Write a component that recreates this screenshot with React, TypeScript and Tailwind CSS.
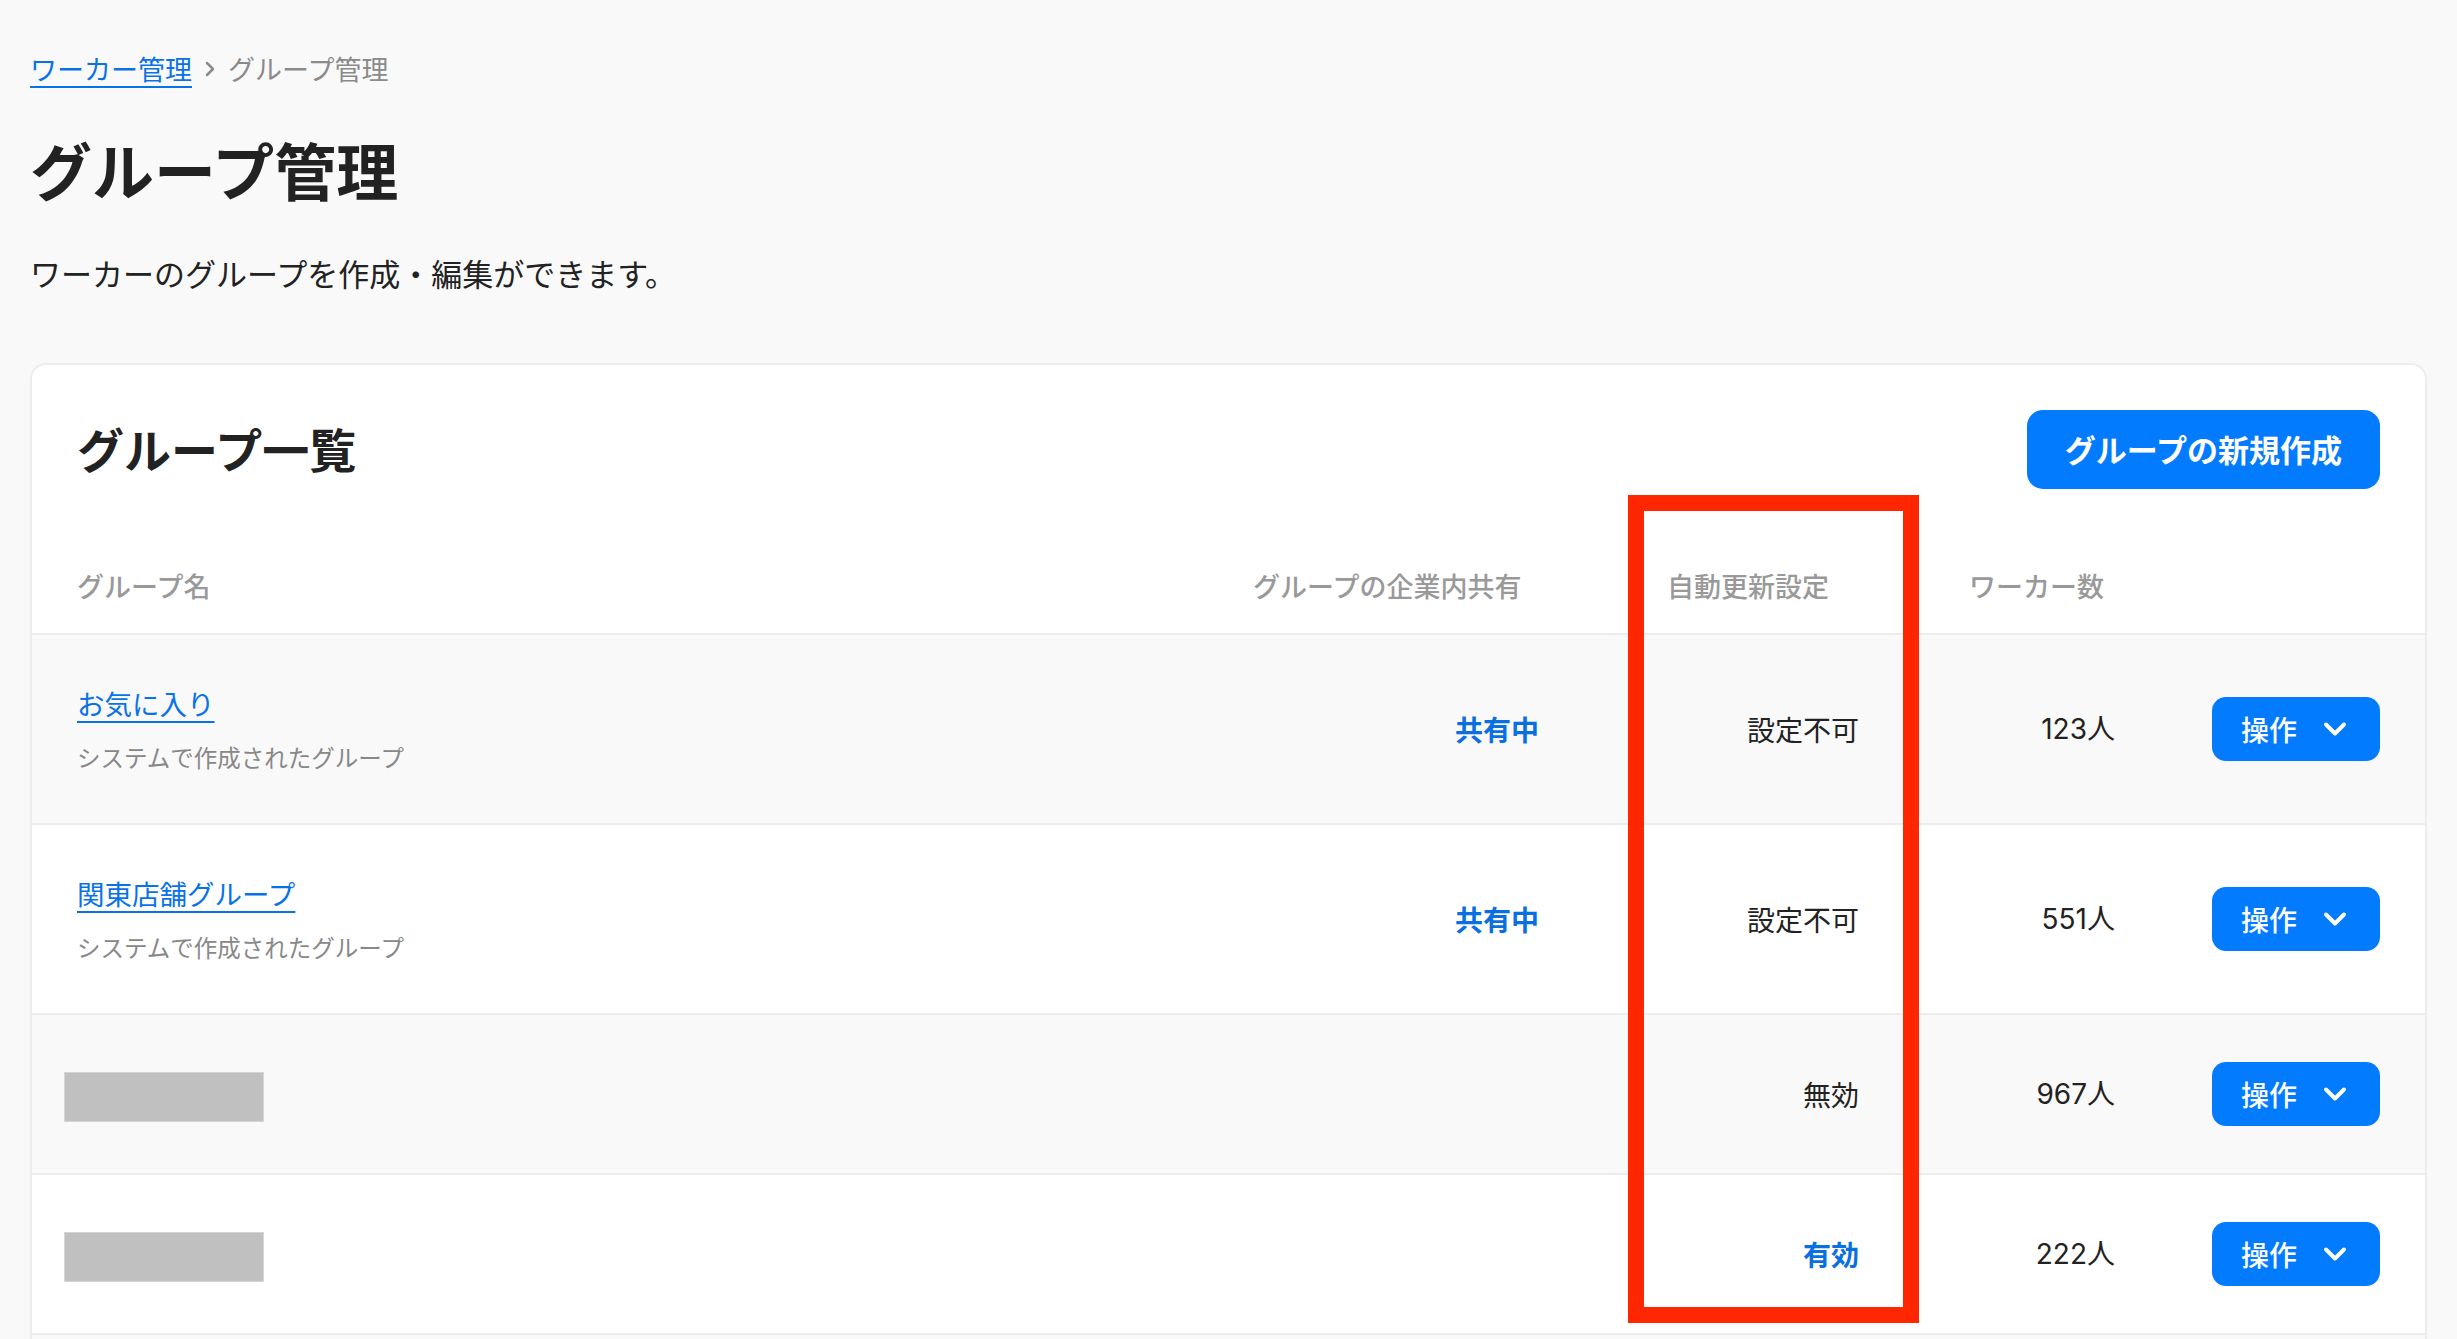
import { ChevronDown } from "lucide-react";

type Group = {
  name?: string;
  note?: string;
  shared?: boolean;
  auto: string;
  count: number;
};

const GROUPS: Group[] = [
  { name: "お気に入り", note: "システムで作成されたグループ", shared: true, auto: "設定不可", count: 123 },
  { name: "関東店舗グループ", note: "システムで作成されたグループ", shared: true, auto: "設定不可", count: 551 },
  { auto: "無効", count: 967 },
  { auto: "有効", count: 222 },
];

const COLS = "grid grid-cols-[1fr_416px_258px_247px_275px]";

function ActionButton() {
  return (
    <button className="flex h-[64px] w-[168px] items-center gap-[20px] rounded-[14px] bg-[#037bff] pl-[29px] text-[28px] font-medium text-white">
      <span className="leading-none">操作</span>
      <ChevronDown size={36} strokeWidth={2.6} />
    </button>
  );
}

export default function App() {
  return (
    <div
      className="relative min-h-screen bg-[#f9f9f9] px-[30px] pb-[60px] text-[#1f1f1f]"
      style={{ fontFamily: '"Noto Sans CJK JP", "Noto Sans", sans-serif' }}
    >
      {/* breadcrumb */}
      <nav className="flex items-center gap-[12px] pt-[49px] text-[27px] leading-[40px]">
        <a className="text-[#0a72e8] underline decoration-[2px] underline-offset-[6px]">ワーカー管理</a>
        <svg width="12" height="18" viewBox="0 0 12 18" className="text-[#8a8a8a]">
          <path d="M3 3l6 6-6 6" fill="none" stroke="currentColor" strokeWidth="2.5" strokeLinecap="round" strokeLinejoin="round" />
        </svg>
        <span className="text-[#8a8a8a]">グループ管理</span>
      </nav>

      <h1 className="mt-[34px] text-[62px] font-bold leading-[92px] text-[#222]">グループ管理</h1>
      <p className="mt-[36px] text-[31px] leading-[44px] text-[#222]">ワーカーのグループを作成・編集ができます。</p>

      <section className="mt-[68px] overflow-hidden rounded-[16px] border-2 border-[#ededed] bg-white">
        <div className="flex items-center justify-between px-[45px] pt-[45px]">
          <h2 className="-mt-[4px] text-[47px] font-bold leading-[60px] text-[#222]">グループ一覧</h2>
          <button className="h-[79px] rounded-[16px] bg-[#037bff] px-[38px] text-[31px] font-bold text-white">
            グループの新規作成
          </button>
        </div>

        {/* header */}
        <div className={`${COLS} pb-[27px] pt-[77px] text-[27px] font-medium leading-[40px] text-[#999]`}>
          <div className="pl-[45px]">グループ名</div>
          <div className="pl-[24px]">グループの企業内共有</div>
          <div className="pl-[22px]">自動更新設定</div>
          <div className="pl-[66px]">ワーカー数</div>
          <div />
        </div>

        {GROUPS.map((g, i) => (
          <div
            key={i}
            className={`${COLS} items-center border-t-2 border-[#ededed] ${g.name ? "h-[190px]" : "h-[160px]"} ${
              i % 2 === 0 ? "bg-[#f9f9f9]" : "bg-white"
            }`}
          >
            {g.name ? (
              <div className="flex flex-col gap-[16px] pl-[45px]">
                <a className="text-[27.5px] leading-[40px] text-[#0a72e8] underline decoration-[2px] underline-offset-[6px]">
                  {g.name}
                </a>
                <span className="text-[23.5px] leading-[36px] text-[#888]">{g.note}</span>
              </div>
            ) : (
              <div className="pl-[32px] pt-[6px]">
                <div className="h-[50px] w-[200px] border border-[#d6d6d6] bg-[#c0c0c0]" />
              </div>
            )}
            <div className="pr-[106px] text-right text-[28px] font-bold text-[#0a6fe0]">{g.shared ? "共有中" : ""}</div>
            <div
              className={`pr-[44px] text-right text-[28px] ${
                g.auto === "有効" ? "font-bold text-[#0a6fe0]" : "text-[#222]"
              }`}
            >
              {g.auto}
            </div>
            <div
              className="pr-[35px] text-right text-[28px] text-[#222]"
              style={{ fontFamily: 'Inter, "Noto Sans CJK JP", sans-serif' }}
            >
              {g.count}人
            </div>
            <div className="flex justify-end pr-[45px]">
              <ActionButton />
            </div>
          </div>
        ))}
        <div className="h-[160px] border-t-2 border-[#ededed] bg-[#f9f9f9]" />
      </section>

      {/* annotation frame */}
      <div className="pointer-events-none absolute left-[1628px] top-[495px] h-[828px] w-[291px] border-[16px] border-[#ff2600]" />
    </div>
  );
}
